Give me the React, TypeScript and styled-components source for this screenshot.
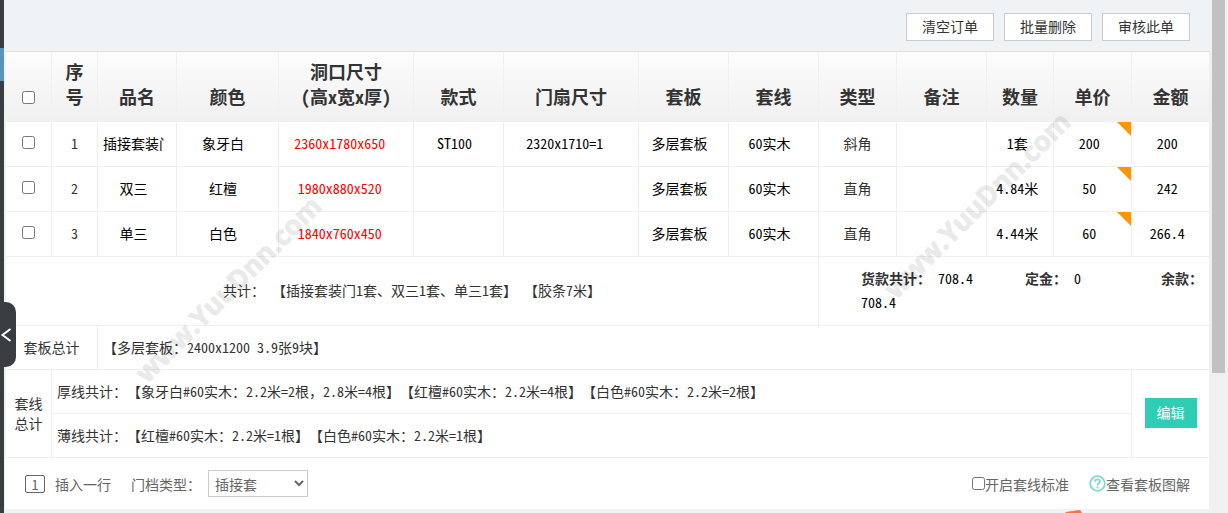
import React from "react";
import styled, { createGlobalStyle } from "styled-components";

const line = "#f0f0f0";
const font = `"Noto Sans CJK SC", sans-serif`;

const GlobalStyle = createGlobalStyle`
  * { box-sizing: border-box; }
  body { margin: 0; background: #eff3f6; }
  body, button, input, select {
    font-family: ${font};
    font-size: 14px;
    line-height: 20px;
    font-feature-settings: "hwid";
  }
`;

const Shell = styled.div`
  position: relative;
  display: flex;
  min-height: 100vh;
  color: #333;
  overflow: hidden;
`;

const SideRail = styled.aside`
  width: 4px;
  flex: none;
  padding-top: 48px;
  background: #393d42;
`;

const ActiveMark = styled.div`
  height: 33px;
  background: #5b93bf;
`;

const CollapseButton = styled.button`
  position: absolute;
  left: 0;
  top: 302px;
  z-index: 2;
  display: flex;
  align-items: center;
  width: 16px;
  height: 65px;
  padding: 0;
  border: 0;
  border-radius: 0 10px 10px 0;
  background: #393d42;
  color: #fff;
`;

const Main = styled.main`
  flex: 1;
  min-width: 0;
  padding-left: 1px;
`;

const Toolbar = styled.div`
  display: flex;
  justify-content: flex-end;
  gap: 10px;
  padding: 13px 19px 10px 0;
`;

const ToolButton = styled.button`
  height: 28px;
  width: 88px;
  padding: 0 0 2px;
  border: 1px solid #ccc;
  background: #fff;
  color: #333;
`;

const Table = styled.table`
  width: 100%;
  table-layout: fixed;
  border-collapse: separate;
  border-spacing: 0;
  border-left: 1px solid ${line};
  background: #fff;
`;

const HeadRow = styled.tr`
  background: linear-gradient(#fdfdfd, #f0f0f0);
`;

const HeadCell = styled.th`
  padding: 7px 10px 13px;
  border-top: 1px solid #ddd;
  border-right: 1px solid ${line};
  font-size: 18px;
  line-height: 25px;
  font-weight: 700;
  white-space: pre-line;
  vertical-align: bottom;
  &:last-child { border-right: 0; }
`;

const Cell = styled.td<{ $h?: number; $align?: string; $end?: boolean }>`
  position: relative;
  height: ${(p) => p.$h ?? 45}px;
  padding: 0 5px 2px;
  border-right: ${(p) => (p.$end ? 0 : 1)}px solid ${line};
  border-bottom: 1px solid ${line};
  text-align: ${(p) => p.$align ?? "left"};
`;

const Check = styled.input`
  display: inline-block;
  width: 13px;
  height: 13px;
  margin: 0;
  vertical-align: 0;
`;

const Field = styled.input<{ $color?: string }>`
  display: block;
  width: 90%;
  height: 24px;
  padding: 0;
  border: 0;
  background: transparent;
  color: ${(p) => p.$color ?? "#000"};
  text-align: center;
`;

const Corner = styled.span`
  position: absolute;
  top: 0;
  right: 0;
  border-top: 14px solid #ff9600;
  border-left: 14px solid transparent;
`;

const Sums = styled.div`
  padding-left: 37px;
  line-height: 24px;
`;

const Amount = styled.output`
  display: inline-block;
  width: 80px;
  color: #000;
`;

const FullWidth = styled.span`
  font-feature-settings: normal;
`;

const EditButton = styled.button`
  display: block;
  width: 52px;
  height: 30px;
  margin: 0 auto;
  padding: 0 0 2px;
  border: 0;
  background: #30cdb6;
  color: #fff;
`;

const Footer = styled.footer`
  display: flex;
  align-items: center;
  justify-content: space-between;
  height: 51px;
  padding: 0 19px 0 20px;
  background: #fff;
  color: #666;
`;

const Group = styled.div`
  display: flex;
  align-items: center;
  gap: 20px;
`;

const InsertRow = styled.label`
  display: flex;
  align-items: center;
  gap: 10px;
`;

const Count = styled.input`
  width: 20px;
  height: 18px;
  padding: 0;
  border: 1px solid #666;
  border-radius: 2px;
  color: #666;
  text-align: center;
`;

const TypeLabel = styled.label`
  display: flex;
  align-items: center;
  gap: 7px;
`;

const Select = styled.select`
  width: 100px;
  height: 27px;
  padding: 0 2px;
  border: 1px solid #ccc;
  background: #fff;
  color: #666;
`;

const CheckLabel = styled.label`
  display: flex;
  align-items: center;
`;

const HelpLink = styled.a`
  display: flex;
  align-items: center;
  color: #666;
  text-decoration: none;
`;

const Track = styled.div`
  width: 19px;
  flex: none;
  padding: 0 3px;
  background: #f0f0f0;
`;

const Thumb = styled.div`
  height: 373px;
  background: #c1c1c1;
`;

const Watermark = styled.div<{ $x: number; $y: number }>`
  position: absolute;
  left: ${(p) => p.$x}px;
  top: ${(p) => p.$y}px;
  z-index: 1;
  transform: translate(-50%, -50%) rotate(-45deg);
  font: 700 27px/30px "Open Sans", sans-serif;
  color: #000;
  -webkit-text-stroke: 1px #000;
  opacity: 0.08;
  pointer-events: none;
`;

const Badge = styled.svg`
  position: absolute;
  right: 146px;
  bottom: 0;
`;

const columns: [string, number][] = [
  ["", 46], ["序号", 46], ["品名", 79], ["颜色", 102], ["洞口尺寸\n(高x宽x厚)", 135],
  ["款式", 90], ["门扇尺寸", 135], ["套板", 90], ["套线", 90], ["类型", 78],
  ["备注", 90], ["数量", 67], ["单价", 78], ["金额", 77],
];

const rows = [
  ["插接套装门", "象牙白", "2360x1780x650", "ST100", "2320x1710=1", "多层套板", "60实木", "斜角", "", "1套", "200", "200"],
  ["双三", "红檀", "1980x880x520", "", "", "多层套板", "60实木", "直角", "", "4.84米", "50", "242"],
  ["单三", "白色", "1840x760x450", "", "", "多层套板", "60实木", "直角", "", "4.44米", "60", "266.4"],
];

export default function App() {
  return (
    <Shell>
      <GlobalStyle />
      <SideRail><ActiveMark /></SideRail>
      <CollapseButton aria-label="收起">
        <svg width="12" height="16" viewBox="0 0 12 16" fill="none" stroke="currentColor" strokeWidth="2">
          <path d="M10.5 2 L2.5 8 L10.5 14" />
        </svg>
      </CollapseButton>
      <Main>
        <Toolbar>
          <ToolButton>清空订单</ToolButton>
          <ToolButton>批量删除</ToolButton>
          <ToolButton>审核此单</ToolButton>
        </Toolbar>
        <Table>
          <colgroup>
            {columns.map(([, w], i) => <col key={i} width={w} />)}
          </colgroup>
          <thead>
            <HeadRow>
              {columns.map(([name], i) => (
                <HeadCell key={i} scope="col">
                  {i === 0 ? <Check type="checkbox" aria-label="全选" /> : name}
                </HeadCell>
              ))}
            </HeadRow>
          </thead>
          <tbody>
            {rows.map((row, r) => (
              <tr key={r}>
                <Cell $align="center"><Check type="checkbox" aria-label={`选择第${r + 1}行`} /></Cell>
                <Cell $align="center">{r + 1}</Cell>
                {row.map((value, c) => (
                  <Cell key={c} $align="center" $end={c === 11}>
                    {c === 7 ? value : (
                      <Field
                        defaultValue={value}
                        aria-label={columns[c + 2][0]}
                        $color={c === 2 ? "#f00" : undefined}
                      />
                    )}
                    {c === 10 && <Corner />}
                  </Cell>
                ))}
              </tr>
            ))}
            <tr>
              <Cell colSpan={9} $h={69} $align="center">共计： 【插接套装门1套、双三1套、单三1套】 【胶条7米】</Cell>
              <Cell colSpan={5} $h={69} $end>
                <Sums>
                  <b>货款共计：</b> <Amount>708.4</Amount> <b>定金：</b> <Amount>0</Amount> <b>余款：</b> <Amount>708.4</Amount>
                </Sums>
              </Cell>
            </tr>
            <tr>
              <Cell colSpan={2} $h={44} $align="center">套板总计</Cell>
              <Cell colSpan={12} $h={44} $end>【多层套板：2400x1200 3.9张9块】</Cell>
            </tr>
            <tr>
              <Cell rowSpan={2} $h={88} $align="center">套线总计</Cell>
              <Cell colSpan={12} $h={44}>
                厚线共计：【象牙白#60实木：2.2米=2根<FullWidth>，</FullWidth>2.8米=4根】【红檀#60实木：2.2米=4根】【白色#60实木：2.2米=2根】
              </Cell>
              <Cell rowSpan={2} $h={88} $align="center" $end><EditButton>编辑</EditButton></Cell>
            </tr>
            <tr>
              <Cell colSpan={12} $h={44}>薄线共计：【红檀#60实木：2.2米=1根】【白色#60实木：2.2米=1根】</Cell>
            </tr>
          </tbody>
        </Table>
        <Footer>
          <Group>
            <InsertRow><Count defaultValue="1" />插入一行</InsertRow>
            <TypeLabel>门档类型：<Select><option>插接套</option></Select></TypeLabel>
          </Group>
          <Group>
            <CheckLabel><Check type="checkbox" />开启套线标准</CheckLabel>
            <HelpLink href="#">
              <svg width="17" height="17" viewBox="0 0 17 17" fill="none" stroke="#7fdccc" strokeWidth="1.8">
                <circle cx="8.5" cy="8.5" r="7.3" />
                <path d="M6 6.8 C6 3.6 11 3.6 11 6.6 C11 8.4 8.5 8.3 8.5 10.4 M8.5 11.6 V13.2" />
              </svg>
              查看套板图解
            </HelpLink>
          </Group>
        </Footer>
      </Main>
      <Track><Thumb /></Track>
      <Watermark $x={228} $y={289}>www.YuuDnn.com</Watermark>
      <Watermark $x={977} $y={205}>www.YuuDnn.com</Watermark>
      <Badge width="17" height="3" viewBox="0 0 17 3"><path d="M0 3 L1 2 L14 0 Q16 0 17 3 Z" fill="#ff7145" /></Badge>
    </Shell>
  );
}
